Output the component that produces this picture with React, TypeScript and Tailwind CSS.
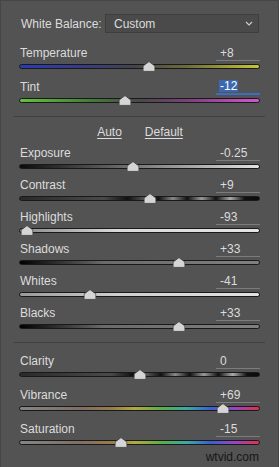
import type { CSSProperties } from 'react'

type SliderDef = {
  label: string
  value: string
  pos: number // -100..100
  track: string
  active?: boolean
}

const whiteBalance: SliderDef[] = [
  {
    label: 'Temperature',
    value: '+8',
    pos: 8,
    track: 'bg-[linear-gradient(to_right,#2a3cb4,#363b86_25%,#444449_48%,#6d6d3c_70%,#c6c637)]',
  },
  {
    label: 'Tint',
    value: '-12',
    pos: -12,
    track: 'bg-[linear-gradient(to_right,#62c23e,#447a3a_30%,#484848_50%,#7a407a_70%,#d455d4)]',
    active: true,
  },
]

const tone: SliderDef[] = [
  { label: 'Exposure', value: '-0.25', pos: -5, track: 'bg-[linear-gradient(to_right,#0c0c0c,#7a7a7a_50%,#e2e2e2)]' },
  {
    label: 'Contrast',
    value: '+9',
    pos: 9,
    track:
      'bg-[linear-gradient(to_right,#2a2a2a,#4a4a4a_35%,#111_45%,#555_52%,#111_58%,#888_64%,#111_70%,#999_76%,#111_82%,#aaa_88%,#111_94%,#0a0a0a)]',
  },
  { label: 'Highlights', value: '-93', pos: -93, track: 'bg-[linear-gradient(to_right,#8a8a8a,#d8d8d8_40%,#e4e4e4)]' },
  { label: 'Shadows', value: '+33', pos: 33, track: 'bg-[linear-gradient(to_right,#000,#6a6a6a_35%,#808080)]' },
  { label: 'Whites', value: '-41', pos: -41, track: 'bg-[linear-gradient(to_right,#9a9a9a,#cfcfcf_40%,#e2e2e2)]' },
  { label: 'Blacks', value: '+33', pos: 33, track: 'bg-[linear-gradient(to_right,#000,#6a6a6a_35%,#808080)]' },
]

const presence: SliderDef[] = [
  {
    label: 'Clarity',
    value: '0',
    pos: 0,
    track:
      'bg-[linear-gradient(to_right,#2a2a2a,#4a4a4a_38%,#111_47%,#555_53%,#111_59%,#888_65%,#111_71%,#999_77%,#111_83%,#aaa_89%,#111_95%,#0a0a0a)]',
  },
  {
    label: 'Vibrance',
    value: '+69',
    pos: 69,
    track:
      'bg-[linear-gradient(to_right,#858585,#7e6e66_25%,#9a7a4a_38%,#b0aa40_48%,#58ae4c_60%,#3aa8a8_70%,#3a5fd0_80%,#9a44c4_90%,#e0304c)]',
  },
  {
    label: 'Saturation',
    value: '-15',
    pos: -15,
    track:
      'bg-[linear-gradient(to_right,#858585,#7e6e66_25%,#9a7a4a_38%,#b0aa40_48%,#58ae4c_60%,#3aa8a8_70%,#3a5fd0_80%,#9a44c4_90%,#e0304c)]',
  },
]

function Thumb({ style }: { style: CSSProperties }) {
  return (
    <svg
      width="13"
      height="11"
      viewBox="0 0 13 11"
      className="absolute top-0 -translate-x-1/2"
      style={style}
    >
      <path
        d="M6.5 0.6 L12.4 5 L12.4 9.8 Q12.4 10.4 11.8 10.4 L1.2 10.4 Q0.6 10.4 0.6 9.8 L0.6 5 Z"
        fill="#d5d5d5"
        stroke="#3c3c3c"
        strokeWidth="0.8"
      />
    </svg>
  )
}

function SliderRow({ s, gap }: { s: SliderDef; gap: string }) {
  const pct = ((s.pos + 100) / 200) * 100
  return (
    <div className={gap}>
      <div className="flex h-[16px] items-center justify-between leading-[14px]">
        <span className="pl-px">{s.label}</span>
        <div
          className={`flex h-[16px] w-[44px] items-center pl-[3px] ${
            s.active ? 'border-b-2 border-[#3a6fbf]' : 'border-b border-[#7c7c7c]'
          }`}
        >
          <span className={s.active ? 'bg-[#3b68ae] px-px leading-[12px] text-white' : 'px-px'}>{s.value}</span>
        </div>
      </div>
      <div className="relative h-[11px]">
        <div className={`absolute inset-x-0 top-[3px] h-[5px] rounded-full border border-[#191919] ${s.track}`} />
        <Thumb style={{ left: `${pct}%` }} />
      </div>
    </div>
  )
}

export default function App() {
  return (
    <div className="h-[467px] w-[279px] overflow-hidden border-x border-t border-[#464646] bg-[#535353] px-[18px] font-['Liberation_Sans',Arial,sans-serif] text-[12px] text-[#dcdcdc]">
      {/* white balance */}
      <div className="mt-[13px] flex h-[19px] items-center">
        <span className="w-[86px] pl-[2px]">White Balance:</span>
        <div className="flex h-[19px] w-[154px] items-center justify-between border border-[#3e3e3e] bg-[#4a4a4a] pl-[8px] pr-[5px]">
          <span>Custom</span>
          <svg width="8" height="5" viewBox="0 0 8 5">
            <polyline points="1,1 4,4 7,1" fill="none" stroke="#d0d0d0" strokeWidth="1.1" />
          </svg>
        </div>
      </div>

      <div className="mt-[12px]">
        {whiteBalance.map((s, i) => (
          <SliderRow key={s.label} s={s} gap={i === 0 ? 'mb-[7px]' : ''} />
        ))}
      </div>

      <div className="-mx-[5px] mt-[10px] h-px bg-[#3f3f3f]" />

      <div className="mt-[7px] flex h-[16px] items-center justify-center gap-[23px] pl-px">
        <span className="underline underline-offset-2">Auto</span>
        <span className="underline underline-offset-2">Default</span>
      </div>

      <div className="mt-[5px]">
        {tone.map((s, i) => (
          <SliderRow key={s.label} s={s} gap={i < tone.length - 1 ? 'mb-[5px]' : ''} />
        ))}
      </div>

      <div className="-mx-[5px] mt-[10px] h-px bg-[#3f3f3f]" />

      <div className="mt-[10px]">
        {presence.map((s, i) => (
          <SliderRow key={s.label} s={s} gap={i < presence.length - 1 ? 'mb-[7px]' : ''} />
        ))}
      </div>

      <div className="mt-[2px] flex h-[14px] items-center justify-end pr-px text-[#161616]">wtvid.com</div>
    </div>
  )
}
